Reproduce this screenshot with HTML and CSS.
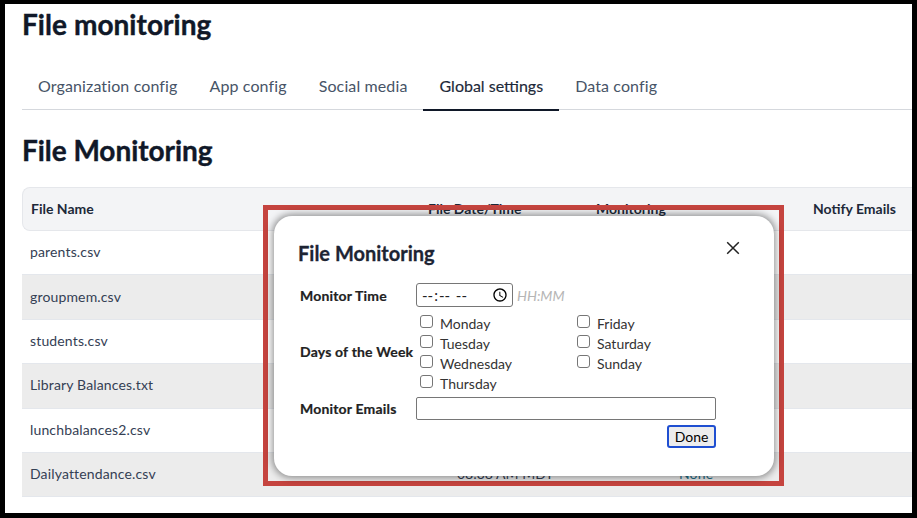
FILE: index.html
```html
<!DOCTYPE html>
<html lang="en">
<head>
<meta charset="utf-8">
<title>File monitoring</title>
<link rel="stylesheet" href="styles.css">
</head>
<body>
<div class="page">
  <h1 class="page-title">File monitoring</h1>
  <nav class="tabs">
    <a class="tab">Organization config</a>
    <a class="tab">App config</a>
    <a class="tab">Social media</a>
    <a class="tab active">Global settings</a>
    <a class="tab">Data config</a>
  </nav>
  <h2 class="section-title">File Monitoring</h2>
  <table class="files">
    <thead>
      <tr><th class="c-name">File Name</th><th class="c-date">File Date/Time</th><th class="c-mon">Monitoring</th><th class="c-notify">Notify Emails</th></tr>
    </thead>
    <tbody>
      <tr><td>parents.csv</td><td></td><td></td><td></td></tr>
      <tr><td>groupmem.csv</td><td></td><td></td><td></td></tr>
      <tr><td>students.csv</td><td></td><td></td><td></td></tr>
      <tr><td>Library Balances.txt</td><td></td><td></td><td></td></tr>
      <tr><td>lunchbalances2.csv</td><td></td><td></td><td></td></tr>
      <tr><td>Dailyattendance.csv</td><td class="time">08:38 AM MDT</td><td class="none">None</td><td></td></tr>
    </tbody>
  </table>

  <div class="annotation">
    <div class="modal">
      <div class="modal-head">
        <h3 class="modal-title">File Monitoring</h3>
        <svg class="close" width="14" height="14" viewBox="0 0 14 14" aria-label="Close"><path d="M1.2 1.2 12.8 12.8M12.8 1.2 1.2 12.8" stroke="#222" stroke-width="1.5" fill="none"/></svg>
      </div>
      <div class="form">
        <label class="lbl lbl-time">Monitor Time</label>
        <div class="time-row">
          <input class="time-input" type="time">
          <span class="hint">HH:MM</span>
        </div>
        <label class="lbl">Days of the Week</label>
        <div class="days">
          <label class="day"><input type="checkbox" class="chk">Monday</label>
          <label class="day"><input type="checkbox" class="chk">Friday</label>
          <label class="day"><input type="checkbox" class="chk">Tuesday</label>
          <label class="day"><input type="checkbox" class="chk">Saturday</label>
          <label class="day"><input type="checkbox" class="chk">Wednesday</label>
          <label class="day"><input type="checkbox" class="chk">Sunday</label>
          <label class="day"><input type="checkbox" class="chk">Thursday</label>
        </div>
        <label class="lbl">Monitor Emails</label>
        <input class="email" type="text">
      </div>
      <div class="actions"><button class="done" type="button">Done</button></div>
    </div>
  </div>
</div>
</body>
</html>
```
FILE: styles.css
```css
* { box-sizing: border-box; }
html, body { margin: 0; height: 100%; overflow: hidden; }
body {
  background: #000;
  padding: 4px 5px 5px;
  font-family: "Lato", "Noto Sans", sans-serif;
  color: #101828;
}
.page {
  position: relative;
  width: 907px;
  height: 509px;
  background: #fff;
  overflow: hidden;
  padding-left: 17px;
}
.page-title {
  margin: 0;
  padding-top: 2px;
  font-size: 28px;
  line-height: 36px;
  font-weight: 700;
  letter-spacing: .05px;
  -webkit-text-stroke: .4px #101828;
  color: #101828;
}
.tabs {
  display: flex;
  gap: 32px;
  margin-top: 22px;
  height: 46px;
  padding-left: 16px;
  border-bottom: 1px solid #d5d8dd;
}
.tab {
  position: relative;
  font-size: 16px;
  line-height: 24px;
  padding-top: 10px;
  height: 46px;
  letter-spacing: .12px;
  color: #475467;
}
.tab.active {
  color: #1d2939;
  font-weight: 400;
  letter-spacing: 0;
  -webkit-text-stroke: .15px #1d2939;
}
.tab.active::after {
  content: "";
  position: absolute;
  left: -16px;
  right: -16px;
  bottom: -1px;
  height: 2px;
  background: #101828;
}
.section-title {
  margin: 22px 0 0;
  font-size: 28px;
  line-height: 36px;
  font-weight: 700;
  letter-spacing: -.05px;
  -webkit-text-stroke: .4px #101828;
  color: #101828;
}
.files {
  margin-top: 19px;
  width: 890px;
  border-collapse: separate;
  border-spacing: 0;
  table-layout: fixed;
  font-size: 14px;
}
.files th {
  height: 44px;
  background: #f3f4f6;
  border-top: 1px solid #e5e7eb;
  border-bottom: 1px solid #e5e7eb;
  text-align: left;
  font-weight: 700;
  color: #1d2939;
  padding: 0 0 2px 9px;
}
.files th:first-child { border-left: 1px solid #e5e7eb; border-radius: 8px 0 0 8px; padding-left: 8px; }
.c-name { width: 397px; }
.c-date { width: 168px; }
.c-mon { width: 217px; }
.files td {
  height: 44.4px;
  padding: 0 0 2px 8px;
  border-bottom: 1px solid #e4e7ec;
  letter-spacing: .15px;
  color: #344054;
}
.files tbody tr:nth-child(even) td { background: #ececec; }
.files td.time { padding-left: 38px; white-space: nowrap; letter-spacing: 0; }
.files td.none { padding-left: 92px; color: #1f6f8b; }

.annotation {
  position: absolute;
  left: 258px;
  top: 201px;
  width: 521px;
  height: 281px;
  border: 5px solid #c5443f;
  padding: 6px 5px 5px 5px;
}
.modal {
  height: 260px;
  margin-left: 1px;
  background: #fff;
  border-radius: 18px;
  box-shadow: 0 0 7px 2px rgba(0, 0, 0, .4);
  padding: 24px 34px 0 24px;
  color: #000;
}
.modal-head {
  display: flex;
  justify-content: space-between;
  align-items: flex-start;
}
.modal-title {
  margin: 0;
  font-size: 20px;
  line-height: 26px;
  font-weight: 700;
  -webkit-text-stroke: .3px #1d2433;
  color: #1d2433;
}
.close { margin: 1px 0 0 0; }
.form {
  display: grid;
  grid-template-columns: 116px 300px;
  margin: 17px 0 0 2px;
  align-items: center;
}
.lbl {
  font-size: 14px;
  font-weight: 700;
  letter-spacing: .18px;
  -webkit-text-stroke: .2px #222;
  color: #222;
  white-space: nowrap;
}
.time-row {
  display: flex;
  align-items: center;
  gap: 4px;
}
.time-input {
  width: 97px;
  height: 24px;
  border: 1px solid #767676;
  border-radius: 3px;
  background: #fff;
  font-family: "Lato", sans-serif;
  font-size: 15px;
  padding: 0 1px 0 4px;
  color: #222;
}
.hint {
  font-size: 14px;
  font-style: italic;
  color: #b5b5b5;
}
.days {
  display: grid;
  grid-template-columns: 157px 1fr;
  grid-auto-rows: 20px;
  padding: 6px 0 3px 4px;
}
.day {
  display: flex;
  align-items: center;
  font-size: 14px;
  color: #333;
}
.chk {
  appearance: none;
  width: 13px;
  height: 13px;
  margin: -3px 7px 0 0;
  background: #fff;
  border: 1px solid #767676;
  border-radius: 3px;
}
.email {
  width: 300px;
  height: 23px;
  margin-top: 1px;
  border: 1px solid #767676;
  border-radius: 2px;
  background: #fff;
}
.actions {
  display: flex;
  justify-content: flex-end;
  width: 418px;
  margin: 5px 0 0 0;
}
.done {
  width: 49px;
  height: 23px;
  padding: 0;
  border: 2px solid #1f4fd1;
  border-radius: 3px;
  background: #ededed;
  font-family: "Lato", sans-serif;
  font-size: 14px;
  color: #000;
}
```
